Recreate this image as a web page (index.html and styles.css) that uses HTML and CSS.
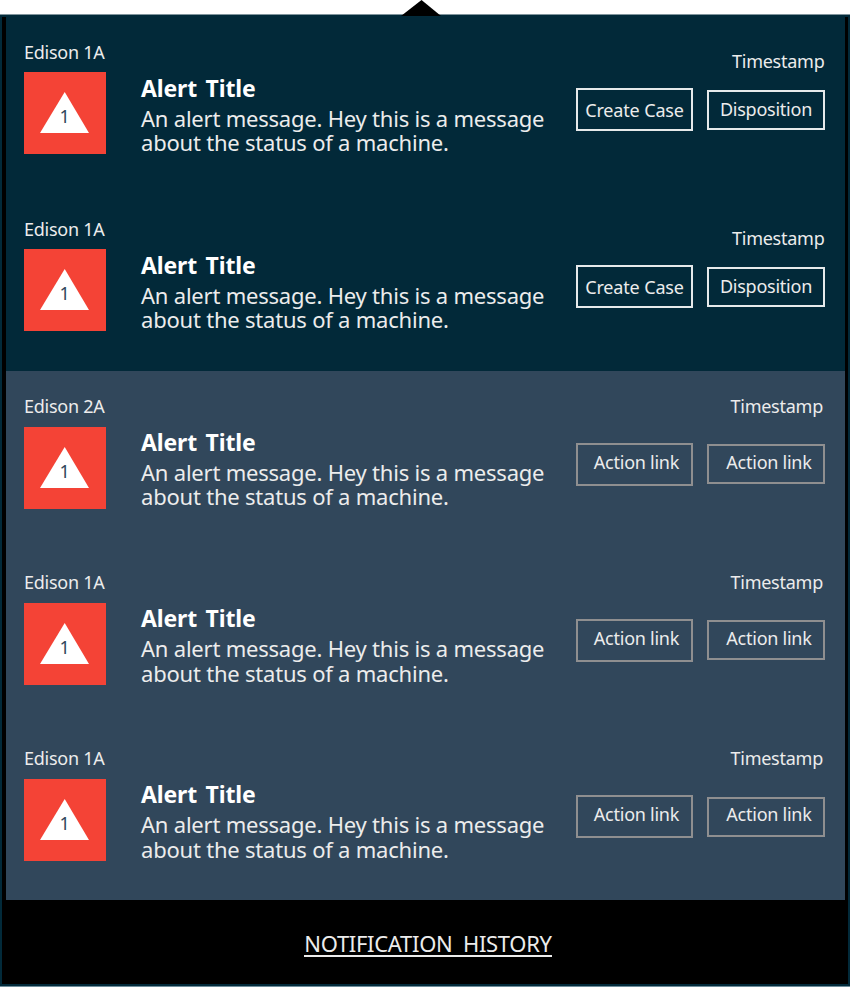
FILE: index.html
```
<!DOCTYPE html>
<html lang="en">
<head>
<meta charset="utf-8">
<title>Notifications</title>
<link rel="stylesheet" href="styles.css">
</head>
<body>
<svg class="pointer" viewBox="0 0 40 16"><path d="M20.500 0 40 16H0Z"/></svg>
<main class="panel">
  <section class="group new">
    <article class="alert">
      <div class="source"><div class="label">Edison 1A</div>
        <div class="badge"><svg viewBox="0 0 82 82"><path d="M40.700 20 65 61H16Z"/></svg><span class="count">1</span></div></div>
      <div class="body"><h2>Alert Title</h2><p>An alert message. Hey this is a message<br>about the status of a machine.</p></div>
      <div class="side"><time>Timestamp</time>
        <div class="actions"><button class="large">Create Case</button><button class="small">Disposition</button></div></div>
    </article>
    <article class="alert">
      <div class="source"><div class="label">Edison 1A</div>
        <div class="badge"><svg viewBox="0 0 82 82"><path d="M40.700 20 65 61H16Z"/></svg><span class="count">1</span></div></div>
      <div class="body"><h2>Alert Title</h2><p>An alert message. Hey this is a message<br>about the status of a machine.</p></div>
      <div class="side"><time>Timestamp</time>
        <div class="actions"><button class="large">Create Case</button><button class="small">Disposition</button></div></div>
    </article>
  </section>
  <section class="group seen">
    <article class="alert">
      <div class="source"><div class="label">Edison 2A</div>
        <div class="badge"><svg viewBox="0 0 82 82"><path d="M40.700 20 65 61H16Z"/></svg><span class="count">1</span></div></div>
      <div class="body"><h2>Alert Title</h2><p>An alert message. Hey this is a message<br>about the status of a machine.</p></div>
      <div class="side"><time>Timestamp</time>
        <div class="actions"><button class="large">Action link</button><button class="small">Action link</button></div></div>
    </article>
    <article class="alert">
      <div class="source"><div class="label">Edison 1A</div>
        <div class="badge"><svg viewBox="0 0 82 82"><path d="M40.700 20 65 61H16Z"/></svg><span class="count">1</span></div></div>
      <div class="body"><h2>Alert Title</h2><p>An alert message. Hey this is a message<br>about the status of a machine.</p></div>
      <div class="side"><time>Timestamp</time>
        <div class="actions"><button class="large">Action link</button><button class="small">Action link</button></div></div>
    </article>
    <article class="alert">
      <div class="source"><div class="label">Edison 1A</div>
        <div class="badge"><svg viewBox="0 0 82 82"><path d="M40.700 20 65 61H16Z"/></svg><span class="count">1</span></div></div>
      <div class="body"><h2>Alert Title</h2><p>An alert message. Hey this is a message<br>about the status of a machine.</p></div>
      <div class="side"><time>Timestamp</time>
        <div class="actions"><button class="large">Action link</button><button class="small">Action link</button></div></div>
    </article>
  </section>
  <footer><a class="history">NOTIFICATION HISTORY</a></footer>
</main>
</body>
</html>
```
FILE: styles.css
```
* { box-sizing: border-box; }
body {
  margin: 0;
  height: 988px;
  overflow: hidden;
  background: #fff;
  color: #ececec;
  font: 18px/24px "Noto Sans", sans-serif;
  letter-spacing: -0.25px;
}
.pointer {
  position: absolute;
  left: 401px;
  top: 0;
  width: 40px;
  height: 16px;
  z-index: 1;
}
.panel {
  display: flex;
  flex-direction: column;
  height: 971px;
  margin-top: 15px;
  background: #000;
  border: 2px solid #022a3a;
  box-shadow: 0 -1px #80949c, 0 1px #6f8d9a;
}
.group { margin: 0 3px 0 4px; }
.new { background: #022939; height: 354px; }
.seen { background: #31475b; height: 529px; }
.alert {
  display: grid;
  grid-template-columns: 117px 435px 1fr;
  height: 177px;
  padding: 0 19.5px 0 18px;
}
.seen .alert { height: 176.333px; }
.source { padding-top: 23px; }
.seen .source { padding-top: 22.5px; }
.badge {
  position: relative;
  width: 81.5px;
  height: 82px;
  margin-top: 8px;
  background: #f44336;
}
.seen .badge { margin-top: 9px; }
.new .badge { margin-top: 8.4px; }
.badge svg { display: block; width: 82px; height: 82px; fill: #fff; }
.count {
  position: absolute;
  left: 35.5px;
  top: 32px;
  color: #31475b;
}
.body { padding-top: 58.5px; white-space: nowrap; }
.seen .body { padding-top: 58.8px; }
h2 {
  margin: 0;
  color: #fff;
  font-size: 23px;
  line-height: 24px;
  letter-spacing: -0.15px;
  word-spacing: 2.7px;
}
p {
  margin: 6px 0 0;
  font-size: 22px;
  line-height: 24.5px;
  letter-spacing: -0.21px;
}
.side { padding-top: 31.5px; }
time { display: block; text-align: right; padding-right: 1px; }
.seen .side { padding-top: 22.5px; }
.seen time { padding-right: 2.5px; }
.actions { display: flex; align-items: center; gap: 14px; margin-top: 15.8px; }
.seen .actions { margin-top: 25px; }
button {
  height: 43px;
  width: 117px;
  padding: 0;
  border: 2px solid #e6e9ea;
  background: none;
  color: inherit;
  font: inherit;
  letter-spacing: inherit;
  white-space: nowrap;
}
.large { letter-spacing: -0.15px; }
.small { width: 118px; height: 40px; padding-bottom: 2px; }
.seen button { border-color: #8f8f90; padding: 0 0 5px 4px; letter-spacing: -0.25px; }
.seen .small { padding: 0 0 5px 6px; }
footer { flex: 1; display: flex; justify-content: center; padding: 30px 0 0 6px; }
.history {
  height: 27px;
  border-bottom: 2px solid #ececec;
  font-size: 22px;
  line-height: 26px;
  letter-spacing: -0.3px;
  word-spacing: 5px;
}
```
